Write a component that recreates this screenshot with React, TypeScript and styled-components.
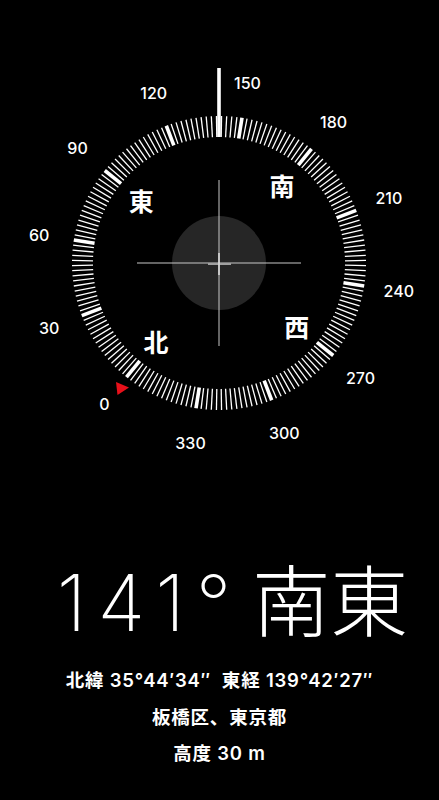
import React from 'react';
import styled, { createGlobalStyle } from 'styled-components';

const GlobalStyle = createGlobalStyle`
    html, body {
        margin: 0;
        padding: 0;
        background: #000;
    }
`;

const HEADING = 141;
const CX = 219;
const CY = 263;
const TICK_OUTER = 147;
const TICK_INNER = 126;
const LABEL_R = 182;
const CARDINAL_R = 100;

const cardinals = [
    { value: 0, label: '北' },
    { value: 90, label: '東' },
    { value: 180, label: '南' },
    { value: 270, label: '西' },
];

const polar = (value: number, r: number) => {
    const a = ((value - HEADING) * Math.PI) / 180;
    return { x: CX + r * Math.sin(a), y: CY - r * Math.cos(a) };
};

const Page = styled.div`
    width: 439px;
    height: 800px;
    background: #000;
    color: #fff;
    display: flex;
    flex-direction: column;
    align-items: center;
    overflow: hidden;
`;

const Dial = styled.svg`
    display: block;
    width: 439px;
    height: 480px;
    flex-shrink: 0;
`;

const DegreeLabel = styled.text`
    fill: #fff;
    font-family: Inter, 'Liberation Sans', sans-serif;
    font-size: 16px;
    font-weight: 500;
`;

const CardinalLabel = styled.text`
    fill: #fff;
    font-family: 'Noto Sans CJK JP', sans-serif;
    font-size: 25px;
    font-weight: 700;
`;

const Heading = styled.div`
    margin-top: 84px;
    padding-left: 26px;
    font-family: Inter, 'Noto Sans CJK JP', sans-serif;
    font-size: 78px;
    font-weight: 250;
    line-height: 78px;
    white-space: nowrap;
`;

const Degrees = styled.span`
    letter-spacing: 11px;
    margin-right: -12px;
`;

const Info = styled.div`
    margin-top: 20px;
    display: flex;
    flex-direction: column;
    align-items: center;
    font-family: Inter, 'Noto Sans CJK JP', sans-serif;
    font-size: 18.5px;
    font-weight: 600;
    letter-spacing: 0.8px;
    line-height: 36.5px;
`;

const InfoLine = styled.div`
    white-space: pre;
`;

const Ticks = () => {
    const ticks = [];
    for (let v = 0; v < 360; v += 2) {
        const major = v % 30 === 0;
        const p1 = polar(v, TICK_INNER);
        const p2 = polar(v, TICK_OUTER);
        ticks.push(
            <line
                key={v}
                x1={p1.x}
                y1={p1.y}
                x2={p2.x}
                y2={p2.y}
                stroke="#fff"
                strokeWidth={major ? 3.6 : 1.3}
            />
        );
    }
    return <g>{ticks}</g>;
};

const Compass = () => {
    const labels = [];
    for (let v = 0; v < 360; v += 30) {
        const p = polar(v, LABEL_R);
        labels.push(
            <DegreeLabel key={v} x={p.x} y={p.y} textAnchor="middle" dominantBaseline="central">
                {v}
            </DegreeLabel>
        );
    }

    return (
        <Dial viewBox="0 0 439 480">
            <Ticks />
            {labels}
            {cardinals.map(c => {
                const p = polar(c.value, CARDINAL_R);
                return (
                    <CardinalLabel
                        key={c.value}
                        x={p.x}
                        y={p.y}
                        textAnchor="middle"
                        dominantBaseline="central"
                    >
                        {c.label}
                    </CardinalLabel>
                );
            })}
            <line x1={CX} y1={68} x2={CX} y2={137} stroke="#fff" strokeWidth={3.6} />
            <polygon points="116,382 129,387.5 117.5,395" fill="#e8101a" />
            <circle cx={CX} cy={CY} r={47} fill="#262626" />
            <line x1={CX} y1={180} x2={CX} y2={346} stroke="#c8c8c8" strokeWidth={1} />
            <line x1={137} y1={CY} x2={301} y2={CY} stroke="#c8c8c8" strokeWidth={1} />
            <line x1={208} y1={264} x2={231} y2={264} stroke="#a0a0a0" strokeWidth={2} />
            <line x1={CX} y1={253} x2={CX} y2={275} stroke="#e0e0e0" strokeWidth={1.5} />
        </Dial>
    );
};

export default function App() {
    return (
        <Page>
            <GlobalStyle />
            <Compass />
            <Heading>
                <Degrees>141°</Degrees> 南東
            </Heading>
            <Info>
                <InfoLine>{'北緯 35°44′34″  東経 139°42′27″'}</InfoLine>
                <InfoLine>板橋区、東京都</InfoLine>
                <InfoLine>高度 30 m</InfoLine>
            </Info>
        </Page>
    );
}
